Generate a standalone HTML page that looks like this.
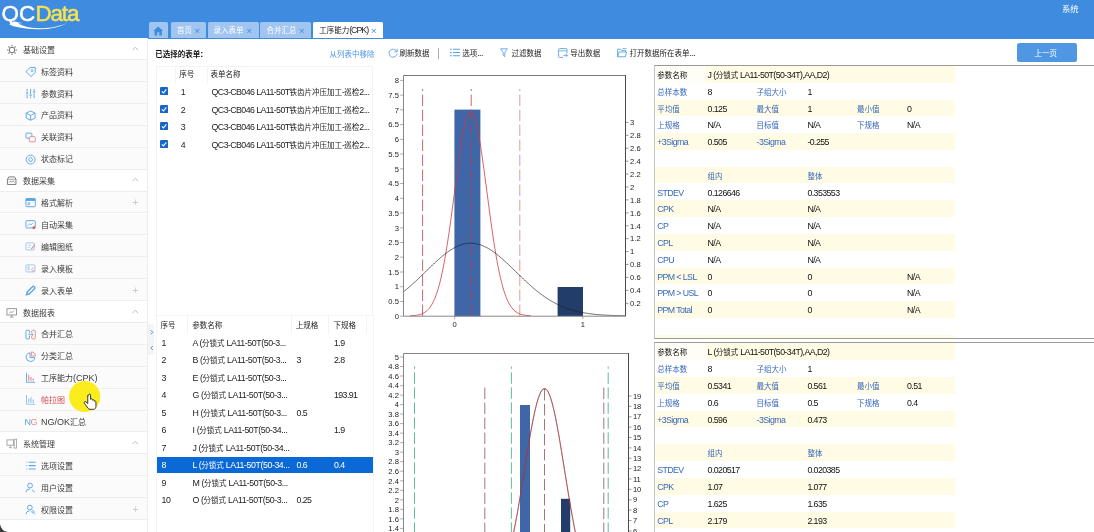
<!DOCTYPE html>
<html lang="zh-CN"><head><meta charset="utf-8"><title>QCData</title>
<style>
html,body{margin:0;padding:0;background:#fff;}
body{width:1094px;height:532px;overflow:hidden;position:relative;font-family:"Liberation Sans","Noto Sans CJK SC",sans-serif;font-size:8px;}
#app{position:absolute;left:0;top:0;width:1094px;height:532px;overflow:hidden;background:#fff;will-change:transform;}
.t{position:absolute;height:12px;line-height:12px;white-space:nowrap;font-size:8.8px;letter-spacing:-0.58px;}
.c{font-size:7.5px;letter-spacing:0}
.c8{font-size:8px;letter-spacing:0}
.logo{position:absolute;font-weight:bold;font-size:22.4px;line-height:26px;height:26px;letter-spacing:-0.75px;white-space:nowrap;}
</style></head><body><div id="app">
<div style="position:absolute;left:0.0px;top:0.0px;width:1094.0px;height:38.5px;background:#3e8be0"></div>
<div class="logo" style="left:1.6px;top:1.2px;color:#fff;font-weight:normal;-webkit-text-stroke:0.45px #fff;letter-spacing:0px">QC</div>
<div class="logo" style="left:35.4px;top:1.2px;color:#f7e352;font-weight:normal;-webkit-text-stroke:0.5px #f7e352;letter-spacing:-1.1px">Data</div>
<svg style="position:absolute;left:0;top:0" width="100" height="38" viewBox="0 0 100 38"><path d="M9.2 24.6 L13.5 21.6 Q16 21.2 18.5 22.6 L22.5 22.9 L18 23.4 Q30 29.4 46 28 Q58 27 67.6 22.9 Q55 29.2 40 29.3 Q22 29.6 9.2 24.6Z" fill="#fff"/></svg>
<div class="t" style="left:1062.0px;top:3px;color:#fff;font-size:8.4px;letter-spacing:0">系统</div>
<div style="position:absolute;left:149.0px;top:22.4px;width:19.0px;height:16.0px;background:#9fc5f0;border-radius:1.5px 1.5px 0 0"></div>
<svg style="position:absolute;left:153.3px;top:25.6px" width="10.4" height="10" viewBox="0 0 20 19"><path d="M10 1 L0.5 9.5 H3 V18 H8 V12 H12 V18 H17 V9.5 H19.5Z" fill="#3e8be0"/></svg>
<div style="position:absolute;left:170.6px;top:22.4px;width:35.4px;height:16.0px;background:#9fc5f0;border-radius:1.5px 1.5px 0 0"></div>
<div class="t" style="left:177.0px;top:24px;color:#fff"><span class="c">首页</span></div>
<div class="t" style="left:194.5px;top:25px;color:#3e8be0;font-size:9.6px;letter-spacing:0">×</div>
<div style="position:absolute;left:208.3px;top:22.4px;width:50.3px;height:16.0px;background:#9fc5f0;border-radius:1.5px 1.5px 0 0"></div>
<div class="t" style="left:213.6px;top:24px;color:#fff"><span class="c">录入表单</span></div>
<div class="t" style="left:246.5px;top:25px;color:#3e8be0;font-size:9.6px;letter-spacing:0">×</div>
<div style="position:absolute;left:260.4px;top:22.4px;width:50.3px;height:16.0px;background:#9fc5f0;border-radius:1.5px 1.5px 0 0"></div>
<div class="t" style="left:266.6px;top:24px;color:#fff"><span class="c">合并汇总</span></div>
<div class="t" style="left:298.9px;top:25px;color:#3e8be0;font-size:9.6px;letter-spacing:0">×</div>
<div style="position:absolute;left:313.0px;top:22.4px;width:69.7px;height:16.0px;background:#fff;border-radius:1.5px 1.5px 0 0"></div>
<div class="t" style="left:319.2px;top:24px;color:#222;letter-spacing:-1px"><span class="c">工序能力</span>(CPK)</div>
<div class="t" style="left:370.9px;top:25px;color:#3e8be0;font-size:9.6px;letter-spacing:0">×</div>
<div style="position:absolute;left:0.0px;top:38.3px;width:147.0px;height:21.9px;background:#fff;border-bottom:1px solid #ececec;box-sizing:border-box"></div>
<svg style="position:absolute;left:5.6px;top:43.8px" width="12" height="12" viewBox="0 0 12 12"><circle cx="6" cy="6" r="2.7" fill="none" stroke="#777" stroke-width="1"/><g stroke="#777" stroke-width="1.1"><path d="M6 1v1.6M6 9.4V11M1 6h1.6M9.4 6H11M2.5 2.5l1.1 1.1M8.4 8.4l1.1 1.1M2.5 9.5l1.1-1.1M8.4 3.6l1.1-1.1"/></g></svg>
<div class="t" style="left:23.0px;top:45px;color:#3c3c3c;font-size:8px;letter-spacing:0">基础设置</div>
<svg style="position:absolute;left:132.4px;top:46.0px" width="6.600" height="5" viewBox="0 0 6.600 5"><path d="M0.500 4.200 3.300 1.200 6.100 4.200" fill="none" stroke="#b9b9b9" stroke-width="0.900"/></svg>
<div style="position:absolute;left:0.0px;top:60.2px;width:147.0px;height:21.9px;background:#fbfbfb;border-bottom:1px solid #eeeeee;box-sizing:border-box"></div>
<svg style="position:absolute;left:24.6px;top:65.8px" width="11.2" height="11.2" viewBox="0 0 12 12"><path d="M1 6 5.6 1.6H11V7L6.4 11.2Z" fill="none" stroke="#5aa5e6" stroke-width="1"/><circle cx="7.6" cy="5" r="1.2" fill="none" stroke="#5aa5e6" stroke-width="0.8"/></svg>
<div class="t" style="left:41.0px;top:66px;color:#3a3a3a;font-size:9px;letter-spacing:0"><span class="c8">标签资料</span></div>
<div style="position:absolute;left:0.0px;top:82.1px;width:147.0px;height:21.9px;background:#fbfbfb;border-bottom:1px solid #eeeeee;box-sizing:border-box"></div>
<svg style="position:absolute;left:24.6px;top:87.8px" width="11.2" height="11.2" viewBox="0 0 12 12"><g stroke="#5aa5e6" stroke-width="1"><path d="M2.2 1v3M2.2 7v4M6 1v5.4M6 9v2M9.8 1v2M9.8 5.6V11"/><path d="M1 5.5h2.4M4.8 7.7h2.4M8.6 4.2H11" stroke-width="1.4"/></g></svg>
<div class="t" style="left:41.0px;top:88px;color:#3a3a3a;font-size:9px;letter-spacing:0"><span class="c8">参数资料</span></div>
<div style="position:absolute;left:0.0px;top:104.0px;width:147.0px;height:21.9px;background:#fbfbfb;border-bottom:1px solid #eeeeee;box-sizing:border-box"></div>
<svg style="position:absolute;left:24.6px;top:109.6px" width="11.2" height="11.2" viewBox="0 0 12 12"><path d="M6 1 10.8 3.4V8.6L6 11 1.2 8.6V3.4Z M1.2 3.4 6 5.8 10.8 3.4M6 5.8V11" fill="none" stroke="#5aa5e6" stroke-width="1"/></svg>
<div class="t" style="left:41.0px;top:109px;color:#3a3a3a;font-size:9px;letter-spacing:0"><span class="c8">产品资料</span></div>
<div style="position:absolute;left:0.0px;top:125.9px;width:147.0px;height:21.9px;background:#fbfbfb;border-bottom:1px solid #eeeeee;box-sizing:border-box"></div>
<svg style="position:absolute;left:24.6px;top:131.6px" width="11.2" height="11.2" viewBox="0 0 12 12"><rect x="1" y="1.2" width="6.4" height="5.4" rx="1" fill="none" stroke="#5aa5e6" stroke-width="1"/><rect x="4.6" y="5" width="6.4" height="5.6" rx="1" fill="#fbfbfb" stroke="#e88a8a" stroke-width="1"/></svg>
<div class="t" style="left:41.0px;top:131px;color:#3a3a3a;font-size:9px;letter-spacing:0"><span class="c8">关联资料</span></div>
<div style="position:absolute;left:0.0px;top:147.8px;width:147.0px;height:21.9px;background:#fbfbfb;border-bottom:1px solid #eeeeee;box-sizing:border-box"></div>
<svg style="position:absolute;left:24.6px;top:153.5px" width="11.2" height="11.2" viewBox="0 0 12 12"><circle cx="6" cy="6" r="4.8" fill="none" stroke="#5aa5e6" stroke-width="1"/><circle cx="6" cy="6" r="2" fill="none" stroke="#5aa5e6" stroke-width="1"/></svg>
<div class="t" style="left:41.0px;top:153px;color:#3a3a3a;font-size:9px;letter-spacing:0"><span class="c8">状态标记</span></div>
<div style="position:absolute;left:0.0px;top:169.7px;width:147.0px;height:21.9px;background:#fff;border-bottom:1px solid #ececec;box-sizing:border-box"></div>
<svg style="position:absolute;left:5.9px;top:175.4px" width="11.4" height="11.4" viewBox="0 0 12 12"><path d="M1.5 4.5 3 2h6l1.5 2.5V10h-9Z" fill="none" stroke="#777" stroke-width="1"/><path d="M1.5 4.500h9" stroke="#777" stroke-width="0.700"/><path d="M3 8l1.500-1.500 1.500 1 1.500-1.500L9 8" fill="none" stroke="#777" stroke-width="0.800"/></svg>
<div class="t" style="left:23.0px;top:176px;color:#3c3c3c;font-size:8px;letter-spacing:0">数据采集</div>
<svg style="position:absolute;left:132.4px;top:177.4px" width="6.600" height="5" viewBox="0 0 6.600 5"><path d="M0.500 4.200 3.300 1.200 6.100 4.200" fill="none" stroke="#b9b9b9" stroke-width="0.900"/></svg>
<div style="position:absolute;left:0.0px;top:191.6px;width:147.0px;height:21.9px;background:#fbfbfb;border-bottom:1px solid #eeeeee;box-sizing:border-box"></div>
<svg style="position:absolute;left:24.6px;top:197.2px" width="11.2" height="11.2" viewBox="0 0 12 12"><rect x="1" y="1.6" width="10" height="8.8" rx="0.8" fill="none" stroke="#5aa5e6" stroke-width="1"/><rect x="1" y="1.6" width="10" height="2.6" fill="#5aa5e6"/><rect x="2.6" y="5.6" width="3" height="3.2" fill="#5aa5e6" opacity=".6"/></svg>
<div class="t" style="left:41.0px;top:197px;color:#3a3a3a;font-size:9px;letter-spacing:0"><span class="c8">格式解析</span></div>
<div class="t" style="left:132.4px;top:197px;color:#c9c9c9;font-size:10px;letter-spacing:0">+</div>
<div style="position:absolute;left:0.0px;top:213.5px;width:147.0px;height:21.9px;background:#fbfbfb;border-bottom:1px solid #eeeeee;box-sizing:border-box"></div>
<svg style="position:absolute;left:24.6px;top:219.2px" width="11.2" height="11.2" viewBox="0 0 12 12"><rect x="1" y="1.8" width="10" height="7.8" rx="0.8" fill="none" stroke="#5aa5e6" stroke-width="1"/><path d="M3 7.4 5 5l1.6 1.4L8.6 4" fill="none" stroke="#5aa5e6" stroke-width="0.8"/><circle cx="9.6" cy="9.4" r="1.5" fill="#e05a5a"/></svg>
<div class="t" style="left:41.0px;top:219px;color:#3a3a3a;font-size:9px;letter-spacing:0"><span class="c8">自动采集</span></div>
<div style="position:absolute;left:0.0px;top:235.4px;width:147.0px;height:21.9px;background:#fbfbfb;border-bottom:1px solid #eeeeee;box-sizing:border-box"></div>
<svg style="position:absolute;left:24.6px;top:241.0px" width="11.2" height="11.2" viewBox="0 0 12 12"><rect x="1" y="2" width="9" height="7.6" rx="0.8" fill="none" stroke="#9cc8f0" stroke-width="1"/><path d="M3 4.6h3.4M3 6.8h2.4" stroke="#9cc8f0" stroke-width="0.8"/><path d="M6.6 8.6 10.8 4" stroke="#e88a8a" stroke-width="1.2"/></svg>
<div class="t" style="left:41.0px;top:241px;color:#3a3a3a;font-size:9px;letter-spacing:0"><span class="c8">编辑图纸</span></div>
<div style="position:absolute;left:0.0px;top:257.3px;width:147.0px;height:21.9px;background:#fbfbfb;border-bottom:1px solid #eeeeee;box-sizing:border-box"></div>
<svg style="position:absolute;left:24.6px;top:262.9px" width="11.2" height="11.2" viewBox="0 0 12 12"><rect x="1" y="2" width="9.6" height="7.6" rx="0.8" fill="none" stroke="#9cc8f0" stroke-width="1"/><path d="M2.8 4.4h2M2.8 6.6h2" stroke="#5aa5e6" stroke-width="1"/><path d="M6.6 7.2 9 4.6M7.4 8.4h3" stroke="#e88a8a" stroke-width="0.9"/></svg>
<div class="t" style="left:41.0px;top:263px;color:#3a3a3a;font-size:9px;letter-spacing:0"><span class="c8">录入模板</span></div>
<div style="position:absolute;left:0.0px;top:279.2px;width:147.0px;height:21.9px;background:#fbfbfb;border-bottom:1px solid #eeeeee;box-sizing:border-box"></div>
<svg style="position:absolute;left:24.6px;top:284.8px" width="11.2" height="11.2" viewBox="0 0 12 12"><path d="M1.6 10.4 2.4 7.4 8 1.8Q9 1 10 2T10.2 4L4.6 9.6Z" fill="none" stroke="#5aa5e6" stroke-width="1.5"/><path d="M2.4 7.6 4.4 9.6" stroke="#5aa5e6" stroke-width="0.8"/></svg>
<div class="t" style="left:41.0px;top:285px;color:#3a3a3a;font-size:9px;letter-spacing:0"><span class="c8">录入表单</span></div>
<div class="t" style="left:132.4px;top:285px;color:#c9c9c9;font-size:10px;letter-spacing:0">+</div>
<div style="position:absolute;left:0.0px;top:301.1px;width:147.0px;height:21.9px;background:#fff;border-bottom:1px solid #ececec;box-sizing:border-box"></div>
<svg style="position:absolute;left:5.9px;top:306.8px" width="11.4" height="11.4" viewBox="0 0 12 12"><rect x="1" y="1.8" width="10" height="6.6" fill="none" stroke="#888" stroke-width="0.9"/><path d="M4 10.6h4M6 8.4v2.2M3.4 6.5l1.8-1.6 1.2 1 2-2" fill="none" stroke="#888" stroke-width="0.8"/></svg>
<div class="t" style="left:23.0px;top:308px;color:#3c3c3c;font-size:8px;letter-spacing:0">数据报表</div>
<svg style="position:absolute;left:132.4px;top:308.8px" width="6.600" height="5" viewBox="0 0 6.600 5"><path d="M0.500 4.200 3.300 1.200 6.100 4.200" fill="none" stroke="#b9b9b9" stroke-width="0.900"/></svg>
<div style="position:absolute;left:0.0px;top:323.0px;width:147.0px;height:21.9px;background:#fbfbfb;border-bottom:1px solid #eeeeee;box-sizing:border-box"></div>
<svg style="position:absolute;left:24.6px;top:328.6px" width="11.2" height="11.2" viewBox="0 0 12 12"><rect x="1" y="1.4" width="3.8" height="9.2" rx="0.8" fill="none" stroke="#5aa5e6" stroke-width="1"/><rect x="7.2" y="1.4" width="3.8" height="9.2" rx="0.8" fill="none" stroke="#e88a8a" stroke-width="1"/><path d="M3.4 6h5.2" stroke="#fbfbfb" stroke-width="2.4"/><path d="M3.4 6h5.2M7.4 4.8 8.8 6 7.4 7.2" fill="none" stroke="#5aa5e6" stroke-width="0.8"/></svg>
<div class="t" style="left:41.0px;top:328px;color:#3a3a3a;font-size:9px;letter-spacing:0"><span class="c8">合并汇总</span></div>
<div style="position:absolute;left:0.0px;top:344.9px;width:147.0px;height:21.9px;background:#fbfbfb;border-bottom:1px solid #eeeeee;box-sizing:border-box"></div>
<svg style="position:absolute;left:24.6px;top:350.5px" width="11.2" height="11.2" viewBox="0 0 12 12"><path d="M5.4 2A4.6 4.6 0 1 0 10.4 7H5.4Z" fill="none" stroke="#5aa5e6" stroke-width="1"/><path d="M6.8 1V5.4H11.2A4.4 4.4 0 0 0 6.8 1Z" fill="none" stroke="#e88a8a" stroke-width="1"/></svg>
<div class="t" style="left:41.0px;top:350px;color:#3a3a3a;font-size:9px;letter-spacing:0"><span class="c8">分类汇总</span></div>
<div style="position:absolute;left:0.0px;top:366.8px;width:147.0px;height:21.9px;background:#fbfbfb;border-bottom:1px solid #eeeeee;box-sizing:border-box"></div>
<svg style="position:absolute;left:24.6px;top:372.4px" width="11.2" height="11.2" viewBox="0 0 12 12"><path d="M1.6 1v10H11" fill="none" stroke="#5aa5e6" stroke-width="1"/><path d="M4 3v6.4" stroke="#e88a8a" stroke-width="1.2"/><path d="M6.4 5.4v4M8.8 7v2.4" stroke="#e88a8a" stroke-width="1.2"/></svg>
<div class="t" style="left:41.0px;top:372px;color:#3a3a3a;font-size:9px;letter-spacing:0"><span class="c8">工序能力</span>(CPK)</div>
<div style="position:absolute;left:0.0px;top:388.7px;width:147.0px;height:21.9px;background:#fbfbfb;border-bottom:1px solid #eeeeee;box-sizing:border-box"></div>
<svg style="position:absolute;left:24.6px;top:394.3px" width="11.2" height="11.2" viewBox="0 0 12 12"><path d="M1.6 1v10H11" fill="none" stroke="#8cc0ee" stroke-width="1"/><path d="M4 5v4.4M6.4 3.4v6M8.8 6v3.4" stroke="#8cc0ee" stroke-width="1.2"/></svg>
<div class="t" style="left:41.0px;top:394px;color:#d24a4a;font-size:9px;letter-spacing:0"><span class="c8">帕拉图</span></div>
<div style="position:absolute;left:0.0px;top:410.6px;width:147.0px;height:21.9px;background:#fbfbfb;border-bottom:1px solid #eeeeee;box-sizing:border-box"></div>
<div class="t" style="left:24.4px;top:416px;color:#5aa5e6;font-size:9px;letter-spacing:-0.3px">N<span style="color:#e88a8a">G</span></div>
<div class="t" style="left:41.0px;top:416px;color:#3a3a3a;font-size:9px;letter-spacing:0">NG/OK<span class="c8">汇总</span></div>
<div style="position:absolute;left:0.0px;top:432.5px;width:147.0px;height:21.9px;background:#fff;border-bottom:1px solid #ececec;box-sizing:border-box"></div>
<svg style="position:absolute;left:5.9px;top:438.2px" width="11.4" height="11.4" viewBox="0 0 12 12"><rect x="1" y="2" width="7" height="5.6" fill="none" stroke="#999" stroke-width="0.9"/><rect x="8.6" y="1.2" width="2.6" height="9.4" fill="none" stroke="#999" stroke-width="0.8"/><path d="M3 10.2h3.4M4.6 7.6v2.6" stroke="#999" stroke-width="0.8"/></svg>
<div class="t" style="left:23.0px;top:439px;color:#3c3c3c;font-size:8px;letter-spacing:0">系统管理</div>
<svg style="position:absolute;left:132.4px;top:440.2px" width="6.600" height="5" viewBox="0 0 6.600 5"><path d="M0.500 4.200 3.300 1.200 6.100 4.200" fill="none" stroke="#b9b9b9" stroke-width="0.900"/></svg>
<div style="position:absolute;left:0.0px;top:454.4px;width:147.0px;height:21.9px;background:#fbfbfb;border-bottom:1px solid #eeeeee;box-sizing:border-box"></div>
<svg style="position:absolute;left:24.6px;top:460.0px" width="11.2" height="11.2" viewBox="0 0 12 12"><g stroke="#5aa5e6" stroke-width="1.2"><path d="M4 2.4h7.4M4 6h7.4M4 9.6h7.4"/><path d="M1 2.4h1.6M1 6h1.6M1 9.6h1.6" stroke="#9cc8f0"/></g></svg>
<div class="t" style="left:41.0px;top:460px;color:#3a3a3a;font-size:9px;letter-spacing:0"><span class="c8">选项设置</span></div>
<div style="position:absolute;left:0.0px;top:476.3px;width:147.0px;height:21.9px;background:#fbfbfb;border-bottom:1px solid #eeeeee;box-sizing:border-box"></div>
<svg style="position:absolute;left:24.6px;top:481.9px" width="11.2" height="11.2" viewBox="0 0 12 12"><circle cx="5.4" cy="3.8" r="2.6" fill="none" stroke="#5aa5e6" stroke-width="1"/><path d="M1 11Q1.2 7.4 5.4 7.4" fill="none" stroke="#5aa5e6" stroke-width="1"/><path d="M7.4 8.4 10.6 11" stroke="#5aa5e6" stroke-width="1"/></svg>
<div class="t" style="left:41.0px;top:482px;color:#3a3a3a;font-size:9px;letter-spacing:0"><span class="c8">用户设置</span></div>
<div style="position:absolute;left:0.0px;top:498.2px;width:147.0px;height:21.9px;background:#fbfbfb;border-bottom:1px solid #eeeeee;box-sizing:border-box"></div>
<svg style="position:absolute;left:24.6px;top:503.8px" width="11.2" height="11.2" viewBox="0 0 12 12"><circle cx="5.2" cy="3.8" r="2.6" fill="none" stroke="#5aa5e6" stroke-width="1"/><path d="M1 11Q1.2 7.4 5 7.4" fill="none" stroke="#5aa5e6" stroke-width="1"/><circle cx="8.6" cy="8.4" r="1.3" fill="none" stroke="#5aa5e6" stroke-width="0.8"/><path d="M9.4 9.4 11 11" stroke="#5aa5e6" stroke-width="0.8"/></svg>
<div class="t" style="left:41.0px;top:504px;color:#3a3a3a;font-size:9px;letter-spacing:0"><span class="c8">权限设置</span></div>
<div class="t" style="left:132.4px;top:504px;color:#c9c9c9;font-size:10px;letter-spacing:0">+</div>
<div style="position:absolute;left:147.0px;top:38.3px;width:1.0px;height:532.0px;background:#ececec"></div>
<div style="position:absolute;left:148.2px;top:324.0px;width:6.0px;height:31.0px;background:#f1f4f9;border-radius:0 3px 3px 0"></div>
<svg style="position:absolute;left:149px;top:328px" width="6" height="24" viewBox="0 0 6 24"><path d="M1.8 2.4 3.8 4.4 1.8 6.4M3.8 18 1.8 20 3.8 22" fill="none" stroke="#767c86" stroke-width="0.9"/></svg>
<svg style="position:absolute;left:0;top:522px" width="10" height="10" viewBox="0 0 10 10"><path d="M0 2Q1 9 8 10H0Z" fill="#3a3a3a"/></svg>
<svg style="position:absolute;left:66px;top:378px" width="40" height="40" viewBox="0 0 40 40"><circle cx="18.7" cy="18.5" r="15.6" fill="#fbec1e"/><g transform="translate(16.6,15.4) scale(1.12)"><path d="M4.600 1.600v7.400l-1.700-1.500c-.9-.7-2 .4-1.300 1.300l3.200 4.400c.4.600 1 1 1.800 1h3.200c1.200 0 2.100-1 2.100-2.200v-4.400c0-.8-1-1.100-1.500-.6v-.5c0-.9-1.200-1.100-1.600-.4v-.5c0-.9-1.300-1.100-1.700-.300V1.600c0-1.300-1.700-1.300-1.700 0Z" fill="#fff" stroke="#222" stroke-width="0.8" stroke-linejoin="round"/></g></svg>
<div class="t" style="left:155.2px;top:48px;color:#111;font-weight:bold"><span class="c">已选择的表单</span>:</div>
<div class="t" style="left:329.6px;top:48px;color:#4a95e4"><span class="c">从列表中移除</span></div>
<div style="position:absolute;left:155.5px;top:65.5px;width:217.5px;height:250.0px;border:1px solid #f3f3f3;border-bottom:none;box-sizing:border-box"></div>
<div style="position:absolute;left:174.5px;top:65.5px;width:1.0px;height:17.4px;background:#f3f3f3"></div>
<div style="position:absolute;left:206.5px;top:65.5px;width:1.0px;height:17.4px;background:#f3f3f3"></div>
<div class="t" style="left:179.2px;top:68px;color:#222"><span class="c">序号</span></div>
<div class="t" style="left:210.6px;top:68px;color:#222"><span class="c">表单名称</span></div>
<svg style="position:absolute;left:159.5px;top:87.1px" width="8.2" height="8.2" viewBox="0 0 10 10"><rect width="10" height="10" rx="1.6" fill="#1667c9"/><path d="M2.2 5.2 4.2 7.2 7.8 3" fill="none" stroke="#fff" stroke-width="1.3"/></svg>
<div class="t" style="left:180.8px;top:86px;color:#222">1</div>
<div class="t" style="left:211.6px;top:86px;color:#222">QC3-CB046 LA11-50T<span class="c">铁齿片冲压加工</span>-<span class="c">巡检</span>2...</div>
<svg style="position:absolute;left:159.5px;top:104.7px" width="8.2" height="8.2" viewBox="0 0 10 10"><rect width="10" height="10" rx="1.6" fill="#1667c9"/><path d="M2.2 5.2 4.2 7.2 7.8 3" fill="none" stroke="#fff" stroke-width="1.3"/></svg>
<div class="t" style="left:180.8px;top:104px;color:#222">2</div>
<div class="t" style="left:211.6px;top:104px;color:#222">QC3-CB046 LA11-50T<span class="c">铁齿片冲压加工</span>-<span class="c">巡检</span>2...</div>
<svg style="position:absolute;left:159.5px;top:122.3px" width="8.2" height="8.2" viewBox="0 0 10 10"><rect width="10" height="10" rx="1.6" fill="#1667c9"/><path d="M2.2 5.2 4.2 7.2 7.8 3" fill="none" stroke="#fff" stroke-width="1.3"/></svg>
<div class="t" style="left:180.8px;top:121px;color:#222">3</div>
<div class="t" style="left:211.6px;top:121px;color:#222">QC3-CB046 LA11-50T<span class="c">铁齿片冲压加工</span>-<span class="c">巡检</span>2...</div>
<svg style="position:absolute;left:159.5px;top:139.9px" width="8.2" height="8.2" viewBox="0 0 10 10"><rect width="10" height="10" rx="1.6" fill="#1667c9"/><path d="M2.2 5.2 4.2 7.2 7.8 3" fill="none" stroke="#fff" stroke-width="1.3"/></svg>
<div class="t" style="left:180.8px;top:139px;color:#222">4</div>
<div class="t" style="left:211.6px;top:139px;color:#222">QC3-CB046 LA11-50T<span class="c">铁齿片冲压加工</span>-<span class="c">巡检</span>2...</div>
<div style="position:absolute;left:155.5px;top:315.2px;width:218.0px;height:230.0px;border:1px solid #f3f3f3;box-sizing:border-box"></div>
<div style="position:absolute;left:187.2px;top:315.2px;width:1.0px;height:19.0px;background:#f3f3f3"></div>
<div style="position:absolute;left:291.2px;top:315.2px;width:1.0px;height:19.0px;background:#f3f3f3"></div>
<div style="position:absolute;left:328.4px;top:315.2px;width:1.0px;height:19.0px;background:#f3f3f3"></div>
<div style="position:absolute;left:366.0px;top:315.2px;width:1.0px;height:19.0px;background:#f3f3f3"></div>
<div class="t" style="left:160.4px;top:319px;color:#222"><span class="c">序号</span></div>
<div class="t" style="left:192.2px;top:319px;color:#222"><span class="c">参数名称</span></div>
<div class="t" style="left:295.8px;top:319px;color:#222"><span class="c">上规格</span></div>
<div class="t" style="left:333.4px;top:319px;color:#222"><span class="c">下规格</span></div>
<div class="t" style="left:161.6px;top:337px;color:#222">1</div>
<div class="t" style="left:192.6px;top:337px;color:#222;letter-spacing:-0.42px">A (<span class="c">分锁式</span> LA11-50T(50-3...</div>
<div class="t" style="left:334.0px;top:337px;color:#222">1.9</div>
<div class="t" style="left:161.6px;top:354px;color:#222">2</div>
<div class="t" style="left:192.6px;top:354px;color:#222;letter-spacing:-0.42px">B (<span class="c">分锁式</span> LA11-50T(50-3...</div>
<div class="t" style="left:296.6px;top:354px;color:#222">3</div>
<div class="t" style="left:334.0px;top:354px;color:#222">2.8</div>
<div class="t" style="left:161.6px;top:372px;color:#222">3</div>
<div class="t" style="left:192.6px;top:372px;color:#222;letter-spacing:-0.42px">E (<span class="c">分锁式</span> LA11-50T(50-3...</div>
<div class="t" style="left:161.6px;top:389px;color:#222">4</div>
<div class="t" style="left:192.6px;top:389px;color:#222;letter-spacing:-0.42px">G (<span class="c">分锁式</span> LA11-50T(50-3...</div>
<div class="t" style="left:334.0px;top:389px;color:#222">193.91</div>
<div class="t" style="left:161.6px;top:407px;color:#222">5</div>
<div class="t" style="left:192.6px;top:407px;color:#222;letter-spacing:-0.42px">H (<span class="c">分锁式</span> LA11-50T(50-3...</div>
<div class="t" style="left:296.6px;top:407px;color:#222">0.5</div>
<div class="t" style="left:161.6px;top:424px;color:#222">6</div>
<div class="t" style="left:192.6px;top:424px;color:#222;letter-spacing:-0.42px">I (<span class="c">分锁式</span> LA11-50T(50-34...</div>
<div class="t" style="left:334.0px;top:424px;color:#222">1.9</div>
<div class="t" style="left:161.6px;top:442px;color:#222">7</div>
<div class="t" style="left:192.6px;top:442px;color:#222;letter-spacing:-0.42px">J (<span class="c">分锁式</span> LA11-50T(50-34...</div>
<div style="position:absolute;left:156.5px;top:456.9px;width:216.5px;height:16.6px;background:#0a69d7"></div>
<div class="t" style="left:161.6px;top:459px;color:#fff">8</div>
<div class="t" style="left:192.6px;top:459px;color:#fff;letter-spacing:-0.42px">L (<span class="c">分锁式</span> LA11-50T(50-34...</div>
<div class="t" style="left:296.6px;top:459px;color:#fff">0.6</div>
<div class="t" style="left:334.0px;top:459px;color:#fff">0.4</div>
<div class="t" style="left:161.6px;top:477px;color:#222">9</div>
<div class="t" style="left:192.6px;top:477px;color:#222;letter-spacing:-0.42px">M (<span class="c">分锁式</span> LA11-50T(50-3...</div>
<div class="t" style="left:161.6px;top:494px;color:#222">10</div>
<div class="t" style="left:192.6px;top:494px;color:#222;letter-spacing:-0.42px">O (<span class="c">分锁式</span> LA11-50T(50-3...</div>
<div class="t" style="left:296.6px;top:494px;color:#222">0.25</div>
<svg style="position:absolute;left:387.6px;top:47.6px" width="10" height="10" viewBox="0 0 10 10"><path d="M8.6 3.4A4 4 0 1 0 9 5.6" fill="none" stroke="#5aa5e6" stroke-width="0.9"/><path d="M9.2 1v2.8H6.4" fill="none" stroke="#5aa5e6" stroke-width="0.9"/></svg>
<div class="t" style="left:399.6px;top:47px;color:#222"><span class="c">刷新数据</span></div>
<div style="position:absolute;left:438.0px;top:47.6px;width:1.0px;height:11.0px;background:#a9b0bb"></div>
<svg style="position:absolute;left:449.6px;top:48.2px" width="10.4" height="9" viewBox="0 0 10.4 9"><g stroke="#5aa5e6" stroke-width="1.1"><path d="M3 1.2h7.4M3 4.5h7.4M3 7.8h7.4M0 1.2h1.8M0 4.5h1.8M0 7.800h1.8"/></g></svg>
<div class="t" style="left:462.2px;top:47px;color:#222"><span class="c">选项</span>...</div>
<svg style="position:absolute;left:500.4px;top:48px" width="8" height="9.4" viewBox="0 0 8 9.4"><path d="M0.6 0.8H7.4L4.8 4.4V8.6L3.2 7.4V4.4Z" fill="none" stroke="#5aa5e6" stroke-width="0.9"/></svg>
<div class="t" style="left:511.4px;top:47px;color:#222"><span class="c">过滤数据</span></div>
<svg style="position:absolute;left:557.8px;top:47.8px" width="10" height="10" viewBox="0 0 10 10"><path d="M9 5.4V1.400Q9 .6 8.200 .6H1.400Q.6 .6 .6 1.400V8.600Q.6 9.400 1.400 9.400H5" fill="none" stroke="#5aa5e6" stroke-width="0.9"/><path d="M.6 2.800H9" stroke="#5aa5e6" stroke-width="0.8"/><path d="M5.400 7.400H9.400M7.800 5.800 9.400 7.400 7.800 9" fill="none" stroke="#5aa5e6" stroke-width="0.9"/></svg>
<div class="t" style="left:570.2px;top:47px;color:#222"><span class="c">导出数据</span></div>
<svg style="position:absolute;left:616.6px;top:48px" width="10" height="9.6" viewBox="0 0 10 9.6"><path d="M.6 8.800V1.200H3.600L4.600 2.400H8.600V4" fill="none" stroke="#5aa5e6" stroke-width="0.9"/><path d="M.6 8.800 2 4H9.600L8.400 8.800Z" fill="none" stroke="#5aa5e6" stroke-width="0.9"/><path d="M5.600 .6H9.400" stroke="#5aa5e6" stroke-width="0.8"/></svg>
<div class="t" style="left:629.6px;top:47px;color:#222"><span class="c">打开数据所在表单</span>...</div>
<div style="position:absolute;left:1016.8px;top:43.4px;width:60.2px;height:18.6px;background:#4f97e3;border-radius:2.5px"></div>
<div class="t" style="left:1034.6px;top:47px;color:#fff"><span class="c">上一页</span></div>
<svg style="position:absolute;left:0;top:0" width="1094" height="532" viewBox="0 0 1094 532" font-family='"Liberation Sans",sans-serif' font-size="7.6">
<rect x="403.5" y="75.5" width="222.0" height="240.7" fill="#fff"/>
<rect x="454.4" y="109.6" width="26" height="206.6" fill="#3f66a6"/>
<rect x="557.6" y="287" width="25.4" height="29.2" fill="#233d6b"/>
<path d="M422.6 89V316.2" stroke="#b5404a" stroke-width="0.8" stroke-dasharray="11.4 3.6" stroke-dashoffset="9.4" fill="none"/>
<path d="M471.2 89V316.2" stroke="#b5404a" stroke-width="0.8" stroke-dasharray="11.4 3.6" stroke-dashoffset="9.4" fill="none"/>
<path d="M519.8 89V316.2" stroke="#dc8f8f" stroke-width="0.9" stroke-dasharray="11.4 3.6" stroke-dashoffset="9.4" fill="none"/>
<clipPath id="c1"><rect x="403.5" y="75.5" width="222.0" height="240.7"/></clipPath>
<path clip-path="url(#c1)" d="M409.9,315.8 L410.9,315.8 L411.9,315.7 L412.9,315.6 L413.9,315.6 L414.9,315.5 L415.9,315.3 L416.9,315.2 L417.9,315.0 L418.9,314.8 L419.9,314.5 L420.9,314.2 L421.9,313.8 L422.9,313.4 L423.9,312.8 L424.9,312.2 L425.9,311.5 L426.9,310.7 L427.9,309.7 L428.9,308.7 L429.9,307.4 L430.9,306.0 L431.9,304.4 L432.9,302.5 L433.9,300.5 L434.9,298.2 L435.9,295.6 L436.9,292.8 L437.9,289.7 L438.9,286.2 L439.9,282.5 L440.9,278.4 L441.9,273.9 L442.9,269.1 L443.9,264.0 L444.9,258.6 L445.9,252.7 L446.9,246.6 L447.9,240.2 L448.9,233.5 L449.9,226.5 L450.9,219.3 L451.9,211.9 L452.9,204.4 L453.9,196.8 L454.9,189.2 L455.9,181.6 L456.9,174.1 L457.9,166.7 L458.9,159.5 L459.9,152.6 L460.9,146.1 L461.9,140.0 L462.9,134.3 L463.9,129.2 L464.9,124.6 L465.9,120.7 L466.9,117.4 L467.9,114.9 L468.9,113.1 L469.9,112.1 L470.9,111.8 L471.9,112.3 L472.9,113.6 L473.9,115.6 L474.9,118.4 L475.9,121.9 L476.9,126.0 L477.9,130.8 L478.9,136.1 L479.9,141.9 L480.9,148.2 L481.9,154.8 L482.9,161.8 L483.9,169.1 L484.9,176.5 L485.9,184.1 L486.9,191.7 L487.9,199.3 L488.9,206.9 L489.9,214.4 L490.9,221.7 L491.9,228.8 L492.9,235.7 L493.9,242.3 L494.9,248.6 L495.9,254.7 L496.9,260.4 L497.9,265.7 L498.9,270.7 L499.9,275.4 L500.9,279.7 L501.9,283.7 L502.9,287.4 L503.9,290.7 L504.9,293.8 L505.9,296.5 L506.9,299.0 L507.9,301.2 L508.9,303.2 L509.9,304.9 L510.9,306.5 L511.9,307.8 L512.9,309.0 L513.9,310.1 L514.9,311.0 L515.9,311.8 L516.9,312.4 L517.9,313.0 L518.9,313.5 L519.9,313.9 L520.9,314.3 L521.9,314.6 L522.9,314.8 L523.9,315.0 L524.9,315.2 L525.9,315.4 L526.9,315.5 L527.9,315.6 L528.9,315.7 L529.9,315.7 L530.9,315.8" stroke="#d23a3e" stroke-width="0.8" fill="none"/>
<path clip-path="url(#c1)" d="M403.5,291.8 L404.5,291.0 L405.5,290.2 L406.5,289.4 L407.5,288.5 L408.5,287.7 L409.5,286.8 L410.5,285.9 L411.5,285.0 L412.5,284.1 L413.5,283.2 L414.5,282.3 L415.5,281.4 L416.5,280.4 L417.5,279.5 L418.5,278.5 L419.5,277.6 L420.5,276.6 L421.5,275.7 L422.5,274.7 L423.5,273.7 L424.5,272.7 L425.5,271.8 L426.5,270.8 L427.5,269.8 L428.5,268.8 L429.5,267.9 L430.5,266.9 L431.5,266.0 L432.5,265.0 L433.5,264.1 L434.5,263.1 L435.5,262.2 L436.5,261.3 L437.5,260.4 L438.5,259.5 L439.5,258.6 L440.5,257.7 L441.5,256.9 L442.5,256.0 L443.5,255.2 L444.5,254.4 L445.5,253.6 L446.5,252.9 L447.5,252.2 L448.5,251.4 L449.5,250.8 L450.5,250.1 L451.5,249.5 L452.5,248.9 L453.5,248.3 L454.5,247.7 L455.5,247.2 L456.5,246.7 L457.5,246.2 L458.5,245.8 L459.5,245.4 L460.5,245.0 L461.5,244.7 L462.5,244.4 L463.5,244.1 L464.5,243.9 L465.5,243.7 L466.5,243.5 L467.5,243.4 L468.5,243.3 L469.5,243.2 L470.5,243.2 L471.5,243.2 L472.5,243.3 L473.5,243.3 L474.5,243.5 L475.5,243.6 L476.5,243.8 L477.5,244.0 L478.5,244.3 L479.5,244.6 L480.5,244.9 L481.5,245.2 L482.5,245.6 L483.5,246.0 L484.5,246.5 L485.5,247.0 L486.5,247.5 L487.5,248.0 L488.5,248.6 L489.5,249.2 L490.5,249.8 L491.5,250.5 L492.5,251.2 L493.5,251.9 L494.5,252.6 L495.5,253.3 L496.5,254.1 L497.5,254.9 L498.5,255.7 L499.5,256.5 L500.5,257.4 L501.5,258.2 L502.5,259.1 L503.5,260.0 L504.5,260.9 L505.5,261.8 L506.5,262.7 L507.5,263.7 L508.5,264.6 L509.5,265.5 L510.5,266.5 L511.5,267.5 L512.5,268.4 L513.5,269.4 L514.5,270.4 L515.5,271.4 L516.5,272.3 L517.5,273.3 L518.5,274.3 L519.5,275.2 L520.5,276.2 L521.5,277.2 L522.5,278.1 L523.5,279.1 L524.5,280.0 L525.5,281.0 L526.5,281.9 L527.5,282.8 L528.5,283.7 L529.5,284.6 L530.5,285.5 L531.5,286.4 L532.5,287.3 L533.5,288.2 L534.5,289.0 L535.5,289.8 L536.5,290.7 L537.5,291.5 L538.5,292.2 L539.5,293.0 L540.5,293.8 L541.5,294.5 L542.5,295.3 L543.5,296.0 L544.5,296.7 L545.5,297.4 L546.5,298.0 L547.5,298.7 L548.5,299.3 L549.5,300.0 L550.5,300.6 L551.5,301.2 L552.5,301.7 L553.5,302.3 L554.5,302.8 L555.5,303.4 L556.5,303.9 L557.5,304.4 L558.5,304.9 L559.5,305.3 L560.5,305.8 L561.5,306.2 L562.5,306.7 L563.5,307.1 L564.5,307.5 L565.5,307.9 L566.5,308.2 L567.5,308.6 L568.5,308.9 L569.5,309.3 L570.5,309.6 L571.5,309.9 L572.5,310.2 L573.5,310.5 L574.5,310.7 L575.5,311.0 L576.5,311.2 L577.5,311.5 L578.5,311.7 L579.5,311.9 L580.5,312.1 L581.5,312.3 L582.5,312.5 L583.5,312.7 L584.5,312.9 L585.5,313.1 L586.5,313.2 L587.5,313.4 L588.5,313.5 L589.5,313.7 L590.5,313.8 L591.5,313.9 L592.5,314.0 L593.5,314.2 L594.5,314.3 L595.5,314.4 L596.5,314.5 L597.5,314.6 L598.5,314.6 L599.5,314.7 L600.5,314.8 L601.5,314.9 L602.5,314.9 L603.5,315.0 L604.5,315.1 L605.5,315.1 L606.5,315.2 L607.5,315.2 L608.5,315.3 L609.5,315.3 L610.5,315.4 L611.5,315.4 L612.5,315.5 L613.5,315.5 L614.5,315.5 L615.5,315.6 L616.5,315.6 L617.5,315.6 L618.5,315.6 L619.5,315.7 L620.5,315.7 L621.5,315.7 L622.5,315.7 L623.5,315.8 L624.5,315.8 L625.5,315.8" stroke="#222" stroke-width="0.7" fill="none"/>
<path d="M403.5 75.5H625.5" stroke="#777" stroke-width="1" fill="none"/>
<path d="M625.5 75.0V316.2" stroke="#4a4a4a" stroke-width="1" fill="none"/>
<path d="M403.5 75.5V316.2H625.5" stroke="#7a7a7a" stroke-width="0.9" fill="none"/>
<path d="M400.1 316.2H403.5" stroke="#777" stroke-width="0.6"/>
<text x="398.9" y="318.9" text-anchor="end" fill="#222">0</text>
<path d="M400.1 301.5H403.5" stroke="#777" stroke-width="0.6"/>
<text x="398.9" y="304.2" text-anchor="end" fill="#222">0.5</text>
<path d="M400.1 286.7H403.5" stroke="#777" stroke-width="0.6"/>
<text x="398.9" y="289.4" text-anchor="end" fill="#222">1</text>
<path d="M400.1 272.0H403.5" stroke="#777" stroke-width="0.6"/>
<text x="398.9" y="274.7" text-anchor="end" fill="#222">1.5</text>
<path d="M400.1 257.2H403.5" stroke="#777" stroke-width="0.6"/>
<text x="398.9" y="259.9" text-anchor="end" fill="#222">2</text>
<path d="M400.1 242.5H403.5" stroke="#777" stroke-width="0.6"/>
<text x="398.9" y="245.2" text-anchor="end" fill="#222">2.5</text>
<path d="M400.1 227.8H403.5" stroke="#777" stroke-width="0.6"/>
<text x="398.9" y="230.5" text-anchor="end" fill="#222">3</text>
<path d="M400.1 213.0H403.5" stroke="#777" stroke-width="0.6"/>
<text x="398.9" y="215.7" text-anchor="end" fill="#222">3.5</text>
<path d="M400.1 198.3H403.5" stroke="#777" stroke-width="0.6"/>
<text x="398.9" y="201.0" text-anchor="end" fill="#222">4</text>
<path d="M400.1 183.5H403.5" stroke="#777" stroke-width="0.6"/>
<text x="398.9" y="186.2" text-anchor="end" fill="#222">4.5</text>
<path d="M400.1 168.8H403.5" stroke="#777" stroke-width="0.6"/>
<text x="398.9" y="171.5" text-anchor="end" fill="#222">5</text>
<path d="M400.1 154.1H403.5" stroke="#777" stroke-width="0.6"/>
<text x="398.9" y="156.8" text-anchor="end" fill="#222">5.5</text>
<path d="M400.1 139.3H403.5" stroke="#777" stroke-width="0.6"/>
<text x="398.9" y="142.0" text-anchor="end" fill="#222">6</text>
<path d="M400.1 124.6H403.5" stroke="#777" stroke-width="0.6"/>
<text x="398.9" y="127.3" text-anchor="end" fill="#222">6.5</text>
<path d="M400.1 109.8H403.5" stroke="#777" stroke-width="0.6"/>
<text x="398.9" y="112.5" text-anchor="end" fill="#222">7</text>
<path d="M400.1 95.1H403.5" stroke="#777" stroke-width="0.6"/>
<text x="398.9" y="97.8" text-anchor="end" fill="#222">7.5</text>
<path d="M400.1 80.4H403.5" stroke="#777" stroke-width="0.6"/>
<text x="398.9" y="83.1" text-anchor="end" fill="#222">8</text>
<path d="M625.5 303.3H628.5" stroke="#555" stroke-width="0.6"/>
<text x="630.1" y="306.0" fill="#222">0.2</text>
<path d="M625.5 290.4H628.5" stroke="#555" stroke-width="0.6"/>
<text x="630.1" y="293.1" fill="#222">0.4</text>
<path d="M625.5 277.4H628.5" stroke="#555" stroke-width="0.6"/>
<text x="630.1" y="280.1" fill="#222">0.6</text>
<path d="M625.5 264.5H628.5" stroke="#555" stroke-width="0.6"/>
<text x="630.1" y="267.2" fill="#222">0.8</text>
<path d="M625.5 251.6H628.5" stroke="#555" stroke-width="0.6"/>
<text x="630.1" y="254.3" fill="#222">1</text>
<path d="M625.5 238.7H628.5" stroke="#555" stroke-width="0.6"/>
<text x="630.1" y="241.4" fill="#222">1.2</text>
<path d="M625.5 225.8H628.5" stroke="#555" stroke-width="0.6"/>
<text x="630.1" y="228.5" fill="#222">1.4</text>
<path d="M625.5 212.8H628.5" stroke="#555" stroke-width="0.6"/>
<text x="630.1" y="215.5" fill="#222">1.6</text>
<path d="M625.5 199.9H628.5" stroke="#555" stroke-width="0.6"/>
<text x="630.1" y="202.6" fill="#222">1.8</text>
<path d="M625.5 187.0H628.5" stroke="#555" stroke-width="0.6"/>
<text x="630.1" y="189.7" fill="#222">2</text>
<path d="M625.5 174.1H628.5" stroke="#555" stroke-width="0.6"/>
<text x="630.1" y="176.8" fill="#222">2.2</text>
<path d="M625.5 161.2H628.5" stroke="#555" stroke-width="0.6"/>
<text x="630.1" y="163.9" fill="#222">2.4</text>
<path d="M625.5 148.2H628.5" stroke="#555" stroke-width="0.6"/>
<text x="630.1" y="150.9" fill="#222">2.6</text>
<path d="M625.5 135.3H628.5" stroke="#555" stroke-width="0.6"/>
<text x="630.1" y="138.0" fill="#222">2.8</text>
<path d="M625.5 122.4H628.5" stroke="#555" stroke-width="0.6"/>
<text x="630.1" y="125.1" fill="#222">3</text>
<path d="M454.7 316.2v3" stroke="#777" stroke-width="0.6"/>
<text x="454.7" y="327" text-anchor="middle" fill="#222">0</text>
<path d="M582.8 316.2v3" stroke="#777" stroke-width="0.6"/>
<text x="582.8" y="327" text-anchor="middle" fill="#222">1</text>
<rect x="403.5" y="353.5" width="225.0" height="246.5" fill="#fff"/>
<rect x="520" y="405" width="10" height="200" fill="#3f66a6"/>
<rect x="561" y="498.8" width="9.2" height="200" fill="#233d6b"/>
<path d="M414.5 366.5V600" stroke="#3aa88c" stroke-width="0.8" stroke-dasharray="11.4 3.6" stroke-dashoffset="9.1" fill="none"/>
<path d="M511.4 366.5V600" stroke="#3aa88c" stroke-width="0.8" stroke-dasharray="11.4 3.6" stroke-dashoffset="9.1" fill="none"/>
<path d="M608.2 366.5V600" stroke="#3aa88c" stroke-width="0.8" stroke-dasharray="11.4 3.6" stroke-dashoffset="9.1" fill="none"/>
<path d="M484.8 387.6V600" stroke="#7e3a3e" stroke-width="0.7" stroke-dasharray="11.4 3.6" fill="none"/>
<path d="M544.5 389V600" stroke="#7e3a3e" stroke-width="0.7" stroke-dasharray="11.4 3.6" fill="none"/>
<path d="M603.8 387.6V600" stroke="#7e3a3e" stroke-width="0.7" stroke-dasharray="11.4 3.6" fill="none"/>
<path d="M470.0,594.8 L471.0,594.8 L472.0,594.7 L473.0,594.7 L474.0,594.6 L475.0,594.5 L476.0,594.4 L477.0,594.3 L478.0,594.2 L479.0,594.0 L480.0,593.9 L481.0,593.7 L482.0,593.4 L483.0,593.2 L484.0,592.9 L485.0,592.5 L486.0,592.1 L487.0,591.7 L488.0,591.2 L489.0,590.6 L490.0,590.0 L491.0,589.2 L492.0,588.4 L493.0,587.5 L494.0,586.5 L495.0,585.3 L496.0,584.1 L497.0,582.7 L498.0,581.2 L499.0,579.5 L500.0,577.6 L501.0,575.6 L502.0,573.4 L503.0,571.0 L504.0,568.4 L505.0,565.6 L506.0,562.6 L507.0,559.4 L508.0,555.9 L509.0,552.2 L510.0,548.3 L511.0,544.2 L512.0,539.8 L513.0,535.2 L514.0,530.4 L515.0,525.4 L516.0,520.2 L517.0,514.7 L518.0,509.1 L519.0,503.4 L520.0,497.4 L521.0,491.4 L522.0,485.3 L523.0,479.1 L524.0,472.8 L525.0,466.6 L526.0,460.3 L527.0,454.1 L528.0,448.0 L529.0,442.0 L530.0,436.1 L531.0,430.5 L532.0,425.1 L533.0,419.9 L534.0,415.0 L535.0,410.4 L536.0,406.2 L537.0,402.4 L538.0,399.0 L539.0,396.1 L540.0,393.6 L541.0,391.5 L542.0,390.0 L543.0,389.0 L544.0,388.5 L545.0,388.5 L546.0,389.0 L547.0,390.0 L548.0,391.5 L549.0,393.6 L550.0,396.1 L551.0,399.0 L552.0,402.4 L553.0,406.2 L554.0,410.4 L555.0,415.0 L556.0,419.9 L557.0,425.1 L558.0,430.5 L559.0,436.1 L560.0,442.0 L561.0,448.0 L562.0,454.1 L563.0,460.3 L564.0,466.6 L565.0,472.8 L566.0,479.1 L567.0,485.3 L568.0,491.4 L569.0,497.4 L570.0,503.4 L571.0,509.1 L572.0,514.7 L573.0,520.2 L574.0,525.4 L575.0,530.4 L576.0,535.2 L577.0,539.8 L578.0,544.2 L579.0,548.3 L580.0,552.2 L581.0,555.9 L582.0,559.4 L583.0,562.6 L584.0,565.6 L585.0,568.4 L586.0,571.0 L587.0,573.4 L588.0,575.6 L589.0,577.6 L590.0,579.5 L591.0,581.2 L592.0,582.7 L593.0,584.1 L594.0,585.3 L595.0,586.5 L596.0,587.5 L597.0,588.4 L598.0,589.2 L599.0,590.0 L600.0,590.6 L601.0,591.2 L602.0,591.7 L603.0,592.1 L604.0,592.5 L605.0,592.9 L606.0,593.2 L607.0,593.4 L608.0,593.7 L609.0,593.9 L610.0,594.0 L611.0,594.2 L612.0,594.3 L613.0,594.4 L614.0,594.5 L615.0,594.6 L616.0,594.7 L617.0,594.7 L618.0,594.8 L619.0,594.8 L620.0,594.8" stroke="#333" stroke-width="0.5" fill="none"/>
<path d="M470.0,594.8 L471.0,594.8 L472.0,594.7 L473.0,594.7 L474.0,594.6 L475.0,594.5 L476.0,594.4 L477.0,594.3 L478.0,594.2 L479.0,594.0 L480.0,593.9 L481.0,593.7 L482.0,593.4 L483.0,593.2 L484.0,592.9 L485.0,592.5 L486.0,592.1 L487.0,591.7 L488.0,591.2 L489.0,590.6 L490.0,590.0 L491.0,589.2 L492.0,588.4 L493.0,587.5 L494.0,586.5 L495.0,585.4 L496.0,584.1 L497.0,582.7 L498.0,581.2 L499.0,579.5 L500.0,577.7 L501.0,575.6 L502.0,573.4 L503.0,571.0 L504.0,568.5 L505.0,565.7 L506.0,562.7 L507.0,559.4 L508.0,556.0 L509.0,552.3 L510.0,548.4 L511.0,544.3 L512.0,539.9 L513.0,535.3 L514.0,530.5 L515.0,525.5 L516.0,520.3 L517.0,514.9 L518.0,509.3 L519.0,503.5 L520.0,497.6 L521.0,491.6 L522.0,485.5 L523.0,479.3 L524.0,473.1 L525.0,466.8 L526.0,460.6 L527.0,454.4 L528.0,448.3 L529.0,442.3 L530.0,436.5 L531.0,430.8 L532.0,425.4 L533.0,420.2 L534.0,415.3 L535.0,410.8 L536.0,406.6 L537.0,402.8 L538.0,399.4 L539.0,396.5 L540.0,394.0 L541.0,391.9 L542.0,390.4 L543.0,389.4 L544.0,388.9 L545.0,388.9 L546.0,389.4 L547.0,390.4 L548.0,391.9 L549.0,394.0 L550.0,396.5 L551.0,399.4 L552.0,402.8 L553.0,406.6 L554.0,410.8 L555.0,415.3 L556.0,420.2 L557.0,425.4 L558.0,430.8 L559.0,436.5 L560.0,442.3 L561.0,448.3 L562.0,454.4 L563.0,460.6 L564.0,466.8 L565.0,473.1 L566.0,479.3 L567.0,485.5 L568.0,491.6 L569.0,497.6 L570.0,503.5 L571.0,509.3 L572.0,514.9 L573.0,520.3 L574.0,525.5 L575.0,530.5 L576.0,535.3 L577.0,539.9 L578.0,544.3 L579.0,548.4 L580.0,552.3 L581.0,556.0 L582.0,559.4 L583.0,562.7 L584.0,565.7 L585.0,568.5 L586.0,571.0 L587.0,573.4 L588.0,575.6 L589.0,577.7 L590.0,579.5 L591.0,581.2 L592.0,582.7 L593.0,584.1 L594.0,585.4 L595.0,586.5 L596.0,587.5 L597.0,588.4 L598.0,589.2 L599.0,590.0 L600.0,590.6 L601.0,591.2 L602.0,591.7 L603.0,592.1 L604.0,592.5 L605.0,592.9 L606.0,593.2 L607.0,593.4 L608.0,593.7 L609.0,593.9 L610.0,594.0 L611.0,594.2 L612.0,594.3 L613.0,594.4 L614.0,594.5 L615.0,594.6 L616.0,594.7 L617.0,594.7 L618.0,594.8 L619.0,594.8 L620.0,594.8" stroke="#cc3a40" stroke-width="0.7" fill="none"/>
<path d="M403.5 353.5H628.5" stroke="#8a8a8a" stroke-width="1" fill="none"/>
<path d="M628.5 353.0V600" stroke="#4a4a4a" stroke-width="1" fill="none"/>
<path d="M403.5 353.5V600" stroke="#7a7a7a" stroke-width="0.9" fill="none"/>
<path d="M400.1 357.0H403.5" stroke="#777" stroke-width="0.6"/>
<text x="398.9" y="359.7" text-anchor="end" fill="#222">5</text>
<path d="M400.1 366.5H403.5" stroke="#777" stroke-width="0.6"/>
<text x="398.9" y="369.2" text-anchor="end" fill="#222">4.8</text>
<path d="M400.1 376.0H403.5" stroke="#777" stroke-width="0.6"/>
<text x="398.9" y="378.7" text-anchor="end" fill="#222">4.6</text>
<path d="M400.1 385.6H403.5" stroke="#777" stroke-width="0.6"/>
<text x="398.9" y="388.3" text-anchor="end" fill="#222">4.4</text>
<path d="M400.1 395.1H403.5" stroke="#777" stroke-width="0.6"/>
<text x="398.9" y="397.8" text-anchor="end" fill="#222">4.2</text>
<path d="M400.1 404.6H403.5" stroke="#777" stroke-width="0.6"/>
<text x="398.9" y="407.3" text-anchor="end" fill="#222">4</text>
<path d="M400.1 414.1H403.5" stroke="#777" stroke-width="0.6"/>
<text x="398.9" y="416.8" text-anchor="end" fill="#222">3.8</text>
<path d="M400.1 423.6H403.5" stroke="#777" stroke-width="0.6"/>
<text x="398.9" y="426.3" text-anchor="end" fill="#222">3.6</text>
<path d="M400.1 433.2H403.5" stroke="#777" stroke-width="0.6"/>
<text x="398.9" y="435.9" text-anchor="end" fill="#222">3.4</text>
<path d="M400.1 442.7H403.5" stroke="#777" stroke-width="0.6"/>
<text x="398.9" y="445.4" text-anchor="end" fill="#222">3.2</text>
<path d="M400.1 452.2H403.5" stroke="#777" stroke-width="0.6"/>
<text x="398.9" y="454.9" text-anchor="end" fill="#222">3</text>
<path d="M400.1 461.7H403.5" stroke="#777" stroke-width="0.6"/>
<text x="398.9" y="464.4" text-anchor="end" fill="#222">2.8</text>
<path d="M400.1 471.2H403.5" stroke="#777" stroke-width="0.6"/>
<text x="398.9" y="473.9" text-anchor="end" fill="#222">2.6</text>
<path d="M400.1 480.8H403.5" stroke="#777" stroke-width="0.6"/>
<text x="398.9" y="483.5" text-anchor="end" fill="#222">2.4</text>
<path d="M400.1 490.3H403.5" stroke="#777" stroke-width="0.6"/>
<text x="398.9" y="493.0" text-anchor="end" fill="#222">2.2</text>
<path d="M400.1 499.8H403.5" stroke="#777" stroke-width="0.6"/>
<text x="398.9" y="502.5" text-anchor="end" fill="#222">2</text>
<path d="M400.1 509.3H403.5" stroke="#777" stroke-width="0.6"/>
<text x="398.9" y="512.0" text-anchor="end" fill="#222">1.8</text>
<path d="M400.1 518.8H403.5" stroke="#777" stroke-width="0.6"/>
<text x="398.9" y="521.5" text-anchor="end" fill="#222">1.6</text>
<path d="M400.1 528.4H403.5" stroke="#777" stroke-width="0.6"/>
<text x="398.9" y="531.1" text-anchor="end" fill="#222">1.4</text>
<path d="M400.1 537.9H403.5" stroke="#777" stroke-width="0.6"/>
<text x="398.9" y="540.6" text-anchor="end" fill="#222">1.2</text>
<path d="M628.5 396.0H631.5" stroke="#555" stroke-width="0.6"/>
<text x="632.9" y="398.7" fill="#222">19</text>
<path d="M628.5 406.4H631.5" stroke="#555" stroke-width="0.6"/>
<text x="632.9" y="409.1" fill="#222">18</text>
<path d="M628.5 416.8H631.5" stroke="#555" stroke-width="0.6"/>
<text x="632.9" y="419.4" fill="#222">17</text>
<path d="M628.5 427.1H631.5" stroke="#555" stroke-width="0.6"/>
<text x="632.9" y="429.8" fill="#222">16</text>
<path d="M628.5 437.5H631.5" stroke="#555" stroke-width="0.6"/>
<text x="632.9" y="440.2" fill="#222">15</text>
<path d="M628.5 447.9H631.5" stroke="#555" stroke-width="0.6"/>
<text x="632.9" y="450.6" fill="#222">14</text>
<path d="M628.5 458.2H631.5" stroke="#555" stroke-width="0.6"/>
<text x="632.9" y="460.9" fill="#222">13</text>
<path d="M628.5 468.6H631.5" stroke="#555" stroke-width="0.6"/>
<text x="632.9" y="471.3" fill="#222">12</text>
<path d="M628.5 479.0H631.5" stroke="#555" stroke-width="0.6"/>
<text x="632.9" y="481.7" fill="#222">11</text>
<path d="M628.5 489.4H631.5" stroke="#555" stroke-width="0.6"/>
<text x="632.9" y="492.1" fill="#222">10</text>
<path d="M628.5 499.8H631.5" stroke="#555" stroke-width="0.6"/>
<text x="632.9" y="502.4" fill="#222">9</text>
<path d="M628.5 510.1H631.5" stroke="#555" stroke-width="0.6"/>
<text x="632.9" y="512.8" fill="#222">8</text>
<path d="M628.5 520.5H631.5" stroke="#555" stroke-width="0.6"/>
<text x="632.9" y="523.2" fill="#222">7</text>
<path d="M628.5 530.9H631.5" stroke="#555" stroke-width="0.6"/>
<text x="632.9" y="533.6" fill="#222">6</text>
<path d="M628.5 541.2H631.5" stroke="#555" stroke-width="0.6"/>
<text x="632.9" y="544.0" fill="#222">5</text>
</svg>
<div style="position:absolute;left:654.3px;top:64.9px;width:441.7px;height:274.0px;border:1px solid #9a9a9a;border-left:1.3px solid #c4c4c4;border-right:none;box-sizing:border-box;background:#fff"></div>
<div style="position:absolute;left:704.5px;top:65.9px;width:250.1px;height:16.8px;background:#fffbe4"></div>
<div style="position:absolute;left:655.3px;top:65.9px;width:49.2px;height:16.8px;background:#fffef6"></div>
<div style="position:absolute;left:655.3px;top:99.5px;width:299.3px;height:16.8px;background:#fffbe4"></div>
<div style="position:absolute;left:655.3px;top:133.1px;width:299.3px;height:16.8px;background:#fffbe4"></div>
<div style="position:absolute;left:655.3px;top:166.7px;width:299.3px;height:16.8px;background:#fffbe4"></div>
<div style="position:absolute;left:655.3px;top:200.3px;width:299.3px;height:16.8px;background:#fffbe4"></div>
<div style="position:absolute;left:655.3px;top:233.9px;width:299.3px;height:16.8px;background:#fffbe4"></div>
<div style="position:absolute;left:655.3px;top:267.5px;width:299.3px;height:16.8px;background:#fffbe4"></div>
<div style="position:absolute;left:655.3px;top:301.1px;width:299.3px;height:16.8px;background:#fffbe4"></div>
<div style="position:absolute;left:655.3px;top:334.7px;width:299.3px;height:3.2px;background:#fffbe4"></div>
<div class="t" style="left:657.2px;top:69px;color:#111"><span class="c">参数名称</span></div>
<div class="t" style="left:707.6px;top:69px;color:#111">J (<span class="c">分锁式</span> LA11-50T(50-34T),AA,D2)</div>
<div class="t" style="left:657.2px;top:86px;color:#3668bb"><span class="c">总样本数</span></div>
<div class="t" style="left:707.6px;top:86px;color:#111">8</div>
<div class="t" style="left:756.6px;top:86px;color:#3668bb"><span class="c">子组大小</span></div>
<div class="t" style="left:807.4px;top:86px;color:#111">1</div>
<div class="t" style="left:657.2px;top:103px;color:#3668bb"><span class="c">平均值</span></div>
<div class="t" style="left:707.6px;top:103px;color:#111">0.125</div>
<div class="t" style="left:756.6px;top:103px;color:#3668bb"><span class="c">最大值</span></div>
<div class="t" style="left:807.4px;top:103px;color:#111">1</div>
<div class="t" style="left:857.0px;top:103px;color:#3668bb"><span class="c">最小值</span></div>
<div class="t" style="left:907.0px;top:103px;color:#111">0</div>
<div class="t" style="left:657.2px;top:119px;color:#3668bb"><span class="c">上规格</span></div>
<div class="t" style="left:707.6px;top:119px;color:#111">N/A</div>
<div class="t" style="left:756.6px;top:119px;color:#3668bb"><span class="c">目标值</span></div>
<div class="t" style="left:807.4px;top:119px;color:#111">N/A</div>
<div class="t" style="left:857.0px;top:119px;color:#3668bb"><span class="c">下规格</span></div>
<div class="t" style="left:907.0px;top:119px;color:#111">N/A</div>
<div class="t" style="left:657.2px;top:136px;color:#3668bb">+3Sigma</div>
<div class="t" style="left:707.6px;top:136px;color:#111">0.505</div>
<div class="t" style="left:756.6px;top:136px;color:#3668bb">-3Sigma</div>
<div class="t" style="left:807.4px;top:136px;color:#111">-0.255</div>
<div class="t" style="left:707.6px;top:170px;color:#3668bb"><span class="c">组内</span></div>
<div class="t" style="left:807.4px;top:170px;color:#3668bb"><span class="c">整体</span></div>
<div class="t" style="left:657.2px;top:187px;color:#3668bb">STDEV</div>
<div class="t" style="left:707.6px;top:187px;color:#111">0.126646</div>
<div class="t" style="left:807.4px;top:187px;color:#111">0.353553</div>
<div class="t" style="left:657.2px;top:203px;color:#3668bb">CPK</div>
<div class="t" style="left:707.6px;top:203px;color:#111">N/A</div>
<div class="t" style="left:807.4px;top:203px;color:#111">N/A</div>
<div class="t" style="left:657.2px;top:220px;color:#3668bb">CP</div>
<div class="t" style="left:707.6px;top:220px;color:#111">N/A</div>
<div class="t" style="left:807.4px;top:220px;color:#111">N/A</div>
<div class="t" style="left:657.2px;top:237px;color:#3668bb">CPL</div>
<div class="t" style="left:707.6px;top:237px;color:#111">N/A</div>
<div class="t" style="left:807.4px;top:237px;color:#111">N/A</div>
<div class="t" style="left:657.2px;top:254px;color:#3668bb">CPU</div>
<div class="t" style="left:707.6px;top:254px;color:#111">N/A</div>
<div class="t" style="left:807.4px;top:254px;color:#111">N/A</div>
<div class="t" style="left:657.2px;top:271px;color:#3668bb">PPM &lt; LSL</div>
<div class="t" style="left:707.6px;top:271px;color:#111">0</div>
<div class="t" style="left:807.4px;top:271px;color:#111">0</div>
<div class="t" style="left:907.0px;top:271px;color:#111">N/A</div>
<div class="t" style="left:657.2px;top:287px;color:#3668bb">PPM &gt; USL</div>
<div class="t" style="left:707.6px;top:287px;color:#111">0</div>
<div class="t" style="left:807.4px;top:287px;color:#111">0</div>
<div class="t" style="left:907.0px;top:287px;color:#111">N/A</div>
<div class="t" style="left:657.2px;top:304px;color:#3668bb">PPM Total</div>
<div class="t" style="left:707.6px;top:304px;color:#111">0</div>
<div class="t" style="left:807.4px;top:304px;color:#111">0</div>
<div class="t" style="left:907.0px;top:304px;color:#111">N/A</div>
<div style="position:absolute;left:654.3px;top:342.0px;width:441.7px;height:260.0px;border:1px solid #9a9a9a;border-left:1.3px solid #c4c4c4;border-right:none;box-sizing:border-box;background:#fff"></div>
<div style="position:absolute;left:704.5px;top:343.2px;width:250.1px;height:16.9px;background:#fffbe4"></div>
<div style="position:absolute;left:655.3px;top:343.2px;width:49.2px;height:16.9px;background:#fffef6"></div>
<div style="position:absolute;left:655.3px;top:376.9px;width:299.3px;height:16.9px;background:#fffbe4"></div>
<div style="position:absolute;left:655.3px;top:410.6px;width:299.3px;height:16.9px;background:#fffbe4"></div>
<div style="position:absolute;left:655.3px;top:444.3px;width:299.3px;height:16.9px;background:#fffbe4"></div>
<div style="position:absolute;left:655.3px;top:478.0px;width:299.3px;height:16.9px;background:#fffbe4"></div>
<div style="position:absolute;left:655.3px;top:511.7px;width:299.3px;height:16.8px;background:#fffbe4"></div>
<div style="position:absolute;left:655.3px;top:545.4px;width:299.3px;height:16.9px;background:#fffbe4"></div>
<div style="position:absolute;left:655.3px;top:579.1px;width:299.3px;height:16.9px;background:#fffbe4"></div>
<div class="t" style="left:657.2px;top:346px;color:#111"><span class="c">参数名称</span></div>
<div class="t" style="left:707.6px;top:346px;color:#111">L (<span class="c">分锁式</span> LA11-50T(50-34T),AA,D2)</div>
<div class="t" style="left:657.2px;top:363px;color:#3668bb"><span class="c">总样本数</span></div>
<div class="t" style="left:707.6px;top:363px;color:#111">8</div>
<div class="t" style="left:756.6px;top:363px;color:#3668bb"><span class="c">子组大小</span></div>
<div class="t" style="left:807.4px;top:363px;color:#111">1</div>
<div class="t" style="left:657.2px;top:380px;color:#3668bb"><span class="c">平均值</span></div>
<div class="t" style="left:707.6px;top:380px;color:#111">0.5341</div>
<div class="t" style="left:756.6px;top:380px;color:#3668bb"><span class="c">最大值</span></div>
<div class="t" style="left:807.4px;top:380px;color:#111">0.561</div>
<div class="t" style="left:857.0px;top:380px;color:#3668bb"><span class="c">最小值</span></div>
<div class="t" style="left:907.0px;top:380px;color:#111">0.51</div>
<div class="t" style="left:657.2px;top:397px;color:#3668bb"><span class="c">上规格</span></div>
<div class="t" style="left:707.6px;top:397px;color:#111">0.6</div>
<div class="t" style="left:756.6px;top:397px;color:#3668bb"><span class="c">目标值</span></div>
<div class="t" style="left:807.4px;top:397px;color:#111">0.5</div>
<div class="t" style="left:857.0px;top:397px;color:#3668bb"><span class="c">下规格</span></div>
<div class="t" style="left:907.0px;top:397px;color:#111">0.4</div>
<div class="t" style="left:657.2px;top:414px;color:#3668bb">+3Sigma</div>
<div class="t" style="left:707.6px;top:414px;color:#111">0.596</div>
<div class="t" style="left:756.6px;top:414px;color:#3668bb">-3Sigma</div>
<div class="t" style="left:807.4px;top:414px;color:#111">0.473</div>
<div class="t" style="left:707.6px;top:447px;color:#3668bb"><span class="c">组内</span></div>
<div class="t" style="left:807.4px;top:447px;color:#3668bb"><span class="c">整体</span></div>
<div class="t" style="left:657.2px;top:464px;color:#3668bb">STDEV</div>
<div class="t" style="left:707.6px;top:464px;color:#111">0.020517</div>
<div class="t" style="left:807.4px;top:464px;color:#111">0.020385</div>
<div class="t" style="left:657.2px;top:481px;color:#3668bb">CPK</div>
<div class="t" style="left:707.6px;top:481px;color:#111">1.07</div>
<div class="t" style="left:807.4px;top:481px;color:#111">1.077</div>
<div class="t" style="left:657.2px;top:498px;color:#3668bb">CP</div>
<div class="t" style="left:707.6px;top:498px;color:#111">1.625</div>
<div class="t" style="left:807.4px;top:498px;color:#111">1.635</div>
<div class="t" style="left:657.2px;top:515px;color:#3668bb">CPL</div>
<div class="t" style="left:707.6px;top:515px;color:#111">2.179</div>
<div class="t" style="left:807.4px;top:515px;color:#111">2.193</div>
<div class="t" style="left:657.2px;top:532px;color:#3668bb">CPU</div>
<div class="t" style="left:707.6px;top:532px;color:#111">1.071</div>
<div class="t" style="left:807.4px;top:532px;color:#111">1.078</div>
</div></body></html>
